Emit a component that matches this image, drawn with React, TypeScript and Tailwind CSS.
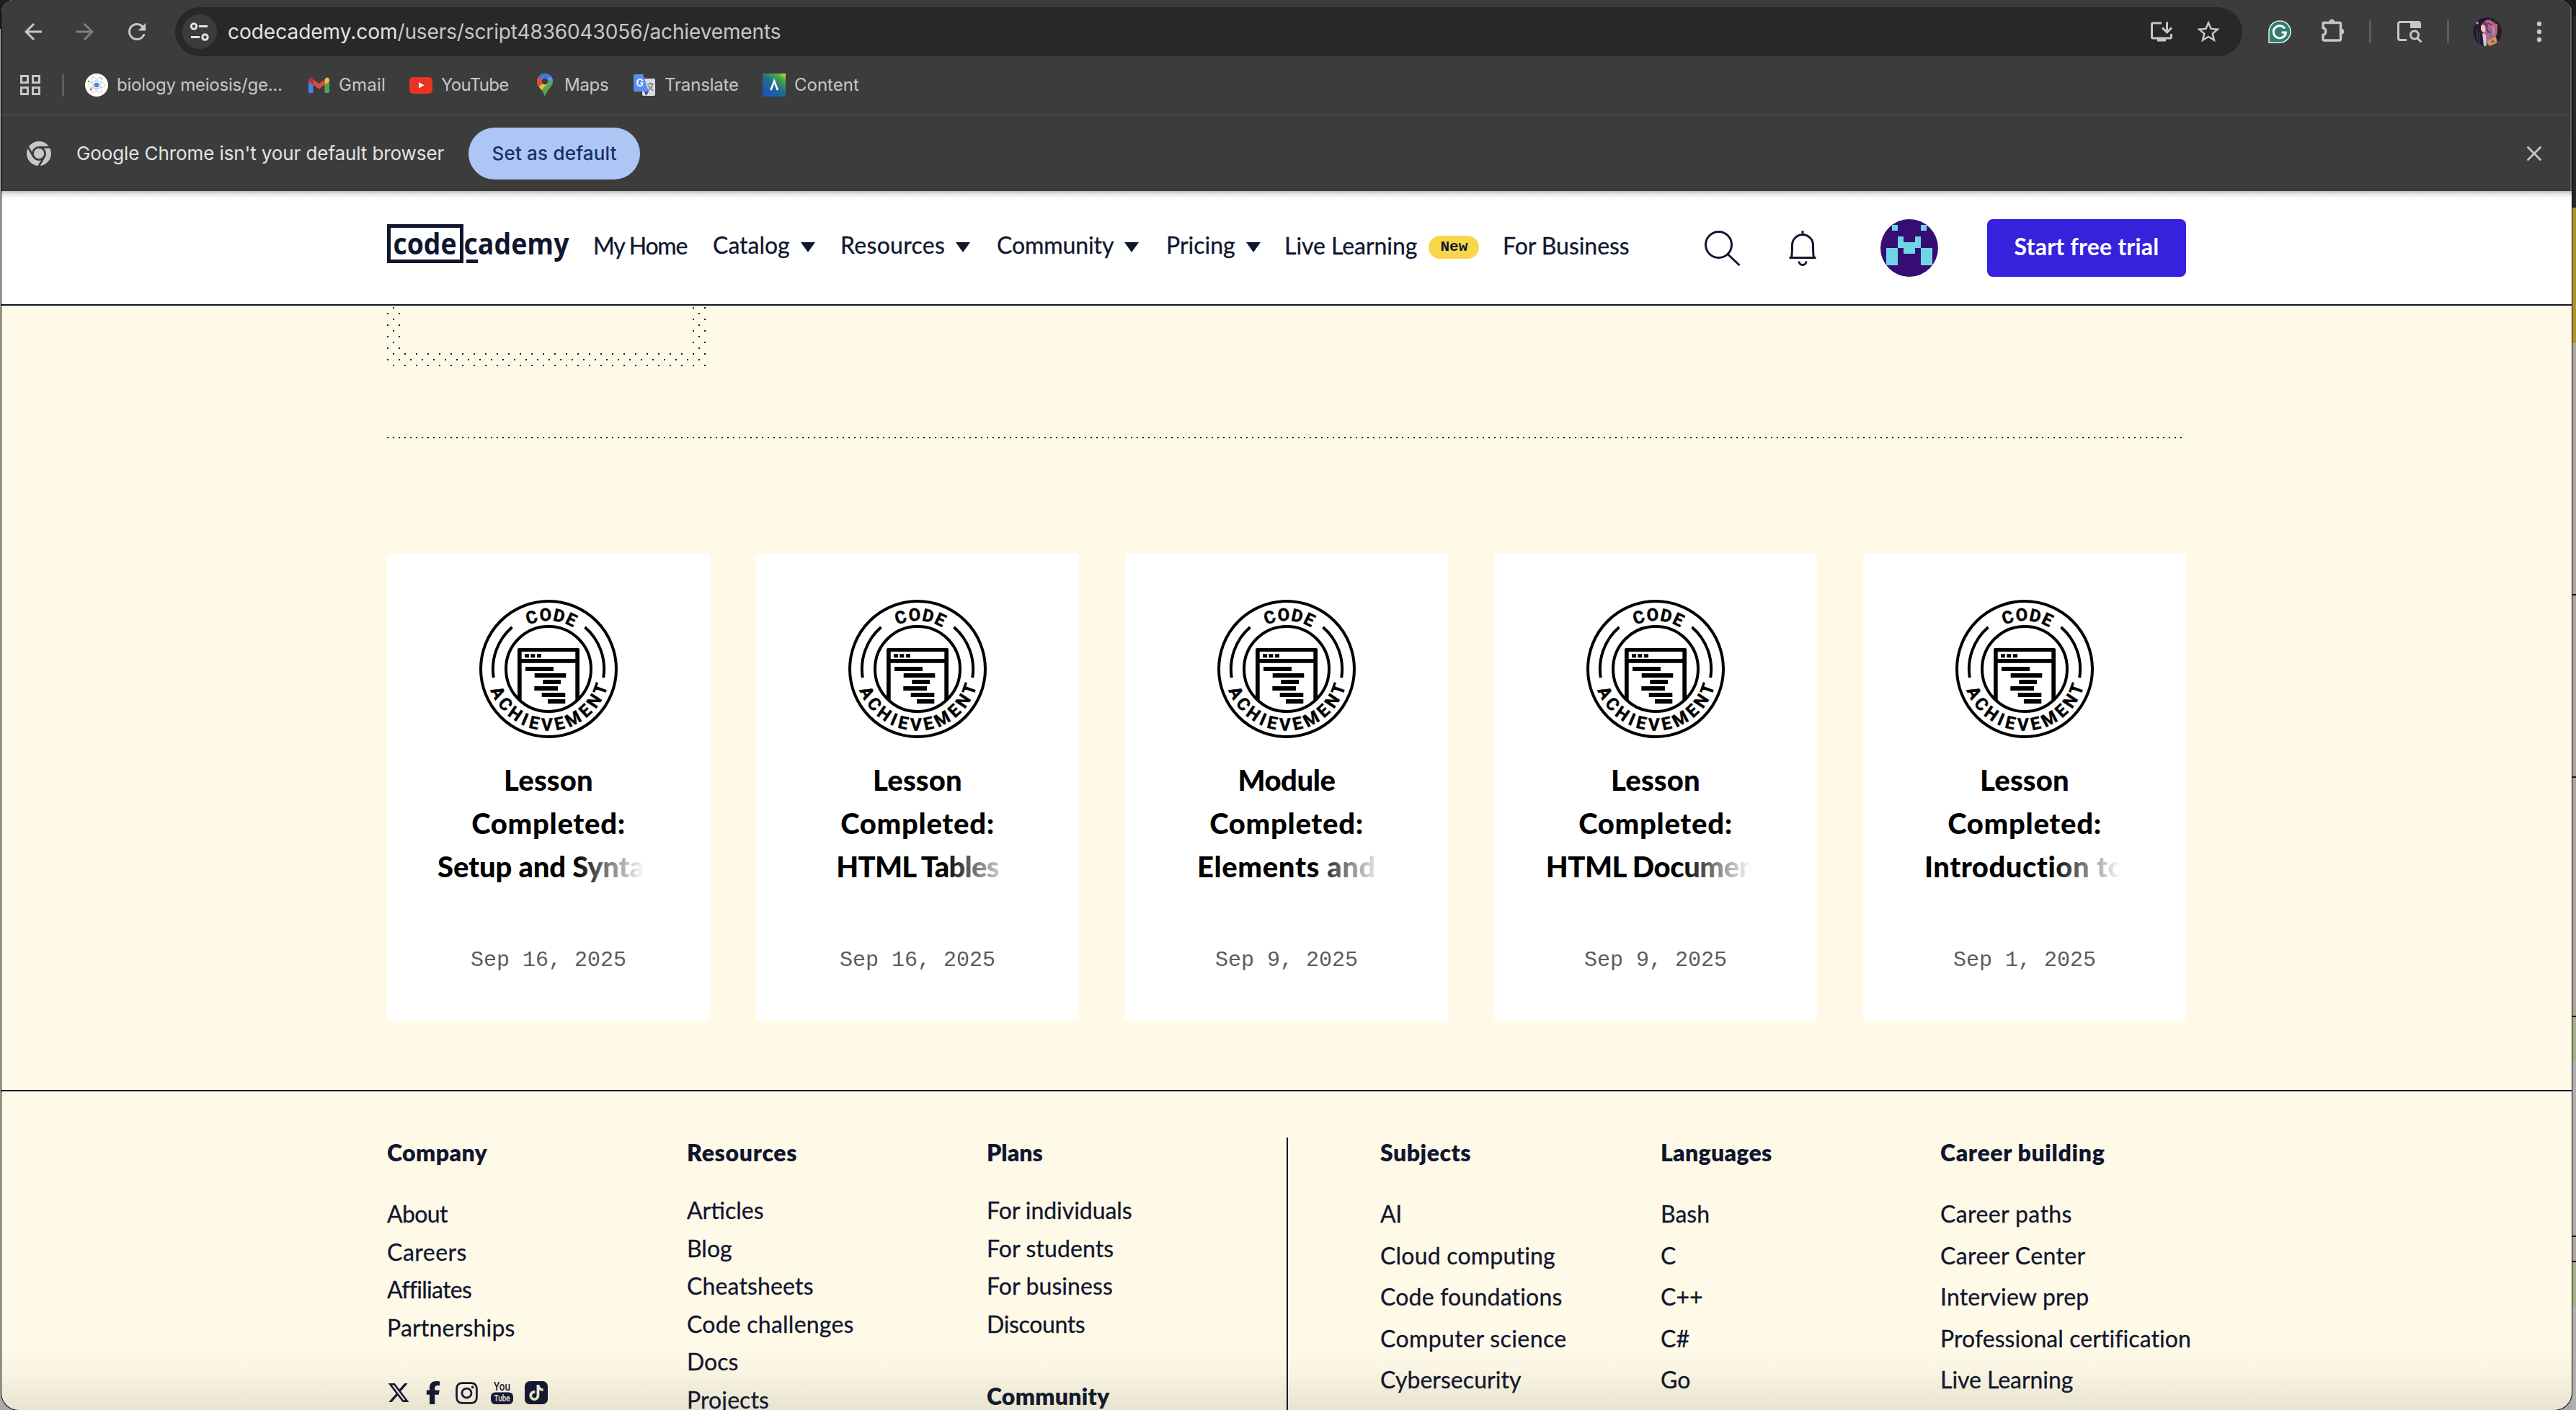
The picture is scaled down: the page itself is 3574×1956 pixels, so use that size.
import React from "react";
import { MdArrowBack, MdArrowForward, MdRefresh, MdStarBorder, MdInstallDesktop } from "react-icons/md";
import { FaXTwitter, FaFacebookF, FaInstagram, FaTiktok } from "react-icons/fa6";

type Item = { text: string; track: string };

/* ---------- browser chrome ---------- */

function SiteInfoIcon() {
  return (
    <div className="flex size-12 items-center justify-center rounded-full bg-[#3c3c3c]">
      <svg width="28" height="26" viewBox="0 0 28 26" fill="none" stroke="#e3e3e3" strokeWidth="3">
        <circle cx="6" cy="5.5" r="3.7" />
        <path d="M13 5.5h12M2 20.5h12" />
        <circle cx="21.5" cy="20.5" r="3.7" />
      </svg>
    </div>
  );
}

function GrammarlyIcon() {
  return (
    <svg width="32" height="32" viewBox="0 0 32 32">
      <path d="M1 31V16A15 15 0 1 1 16 31Z" fill="#2f7d6d" stroke="#e8efed" strokeWidth="1.5" />
      <path d="M23 11.5A8.6 8.6 0 1 0 24.4 17H18.5" fill="none" stroke="#fff" strokeWidth="3" />
    </svg>
  );
}

function ExtensionsIcon() {
  return (
    <svg width="32" height="34" viewBox="0 0 32 34">
      <path d="M4 6.500H25A1.500 1.500 0 0 1 26.500 8V29.500A1.500 1.500 0 0 1 25 31H3.500A1.500 1.500 0 0 1 2 29.500V23.500A5.200 5.200 0 0 0 2 13.500V8A1.500 1.500 0 0 1 3.500 6.500Z" fill="none" stroke="#c7c7c7" strokeWidth="3.400" />
      <path d="M10 6A4.200 4.200 0 0 1 18.400 6ZM27 14.500A4.200 4.200 0 0 1 27 23Z" fill="#c7c7c7" />
    </svg>
  );
}

function TabSearchIcon() {
  return (
    <svg width="36" height="32" viewBox="0 0 36 32" fill="none" stroke="#c7c7c7" strokeWidth="3">
      <path d="M14 27.5H5A2.5 2.5 0 0 1 2.5 25V5A2.5 2.5 0 0 1 5 2.5H30A2.5 2.5 0 0 1 32.500 5V10" />
      <path d="M19 2h12.500a2.500 2.500 0 0 1 2.500 2.500V11H19Z" fill="#c7c7c7" stroke="none" />
      <circle cx="25" cy="20.500" r="5.500" />
      <path d="M29 25L34.500 30.500" />
    </svg>
  );
}

function ProfilePicture() {
  return (
    <svg width="40" height="40" viewBox="0 0 40 40">
      <defs>
        <clipPath id="profile"><circle cx="20" cy="20" r="20" /></clipPath>
      </defs>
      <g clipPath="url(#profile)">
        <rect width="40" height="40" fill="#221c2c" />
        <path d="M14 8Q18 2 24 4Q34 8 34 16Q34 26 28 32L20 38L16 26Q10 16 14 8Z" fill="#b9608f" />
        <path d="M11 12Q14 8 18 10L17 21Q12 21 11 17Z" fill="#eec3c8" />
        <path d="M12 9Q17 4 21 9L20 24L17 12Z" fill="#7c3b62" />
        <path d="M13 22L18 24L19 40H15Z" fill="#cfc8d4" />
        <path d="M22 14Q29 22 23 30" stroke="#3f8f96" strokeWidth="2" fill="none" />
        <path d="M25 11Q31 14 28 24" stroke="#e892bb" strokeWidth="1.500" fill="none" />
        <path d="M21 8L27 12M20 18L24 22" stroke="#5b2d54" strokeWidth="1.500" />
        <path d="M20 33L32 27L34 36L22 40Z" fill="#dc9a3c" />
        <path d="M24 34L29 31L30 36Z" fill="#4c62b8" />
        <path d="M29 10L34 9L34 15Z" fill="#a8803f" />
        <circle cx="6" cy="8" r="1.800" fill="#e58ac0" />
        <path d="M6 16V32M9 20V36M31 3V8M24 0V4" stroke="#453b55" strokeWidth="1.200" />
      </g>
    </svg>
  );
}

function Toolbar() {
  return (
    <div className="flex h-[88px] items-center pl-[26px] text-[#c7c7c7]">
      <MdArrowBack size={36} />
      <MdArrowForward size={36} className="ml-9 text-[#7e7e7e]" />
      <MdRefresh size={36} className="ml-9" />
      <div className="ml-[35px] flex h-[68px] w-[2868px] items-center rounded-full bg-[#282828] pl-2.5 font-['Inter',sans-serif] text-[28px]">
        <SiteInfoIcon />
        <span className="ml-[15px] tracking-[-0.02px] text-[#e3e3e3]">codecademy.com</span>
        <span className="flex-1 tracking-[-0.12px] text-[#c7c7c7]">/users/script4836043056/achievements</span>
        <MdInstallDesktop size={36} />
        <MdStarBorder size={38} className="mr-[28px] ml-7" />
      </div>
      <div className="ml-9"><GrammarlyIcon /></div>
      <div className="-mt-1 ml-[42px]"><ExtensionsIcon /></div>
      <div className="ml-[34px] h-8 w-[3px] rounded bg-[#5e5e5e]" />
      <div className="ml-[35px]"><TabSearchIcon /></div>
      <div className="ml-[34px] h-8 w-[3px] rounded bg-[#5e5e5e]" />
      <div className="ml-[33px]"><ProfilePicture /></div>
      <svg className="ml-[46px]" width="12" height="32" viewBox="0 0 12 32" fill="#c7c7c7">
        <circle cx="6" cy="5" r="3.200" /><circle cx="6" cy="16" r="3.200" /><circle cx="6" cy="27" r="3.200" />
      </svg>
    </div>
  );
}

function BiologyIcon() {
  return (
    <svg width="32" height="32" viewBox="0 0 32 32" fill="none">
      <circle cx="16" cy="16" r="16" fill="#fff" />
      <g stroke="#c9ccd2" strokeWidth="1">
        <ellipse cx="16" cy="16" rx="12" ry="4.500" />
        <ellipse cx="16" cy="16" rx="12" ry="4.500" transform="rotate(60 16 16)" />
        <ellipse cx="16" cy="16" rx="12" ry="4.500" transform="rotate(120 16 16)" />
      </g>
      <circle cx="16" cy="16" r="3.200" fill="#3f86f0" />
      <circle cx="23" cy="7" r="1.400" fill="#f4c33c" />
      <circle cx="5" cy="11" r="1.400" fill="#55b46a" />
      <circle cx="8" cy="22" r="1.400" fill="#e0483b" />
    </svg>
  );
}

function GmailIcon() {
  return (
    <svg width="29" height="22" viewBox="0 0 29 22">
      <path d="M0 5L6.500 9V22H2A2 2 0 0 1 0 20Z" fill="#4a80ee" />
      <path d="M29 5L22.500 9V22H27A2 2 0 0 0 29 20Z" fill="#4fa65a" />
      <path d="M22.500 3.200L24 1.500Q26 -.5 28 1.500Q29 2.500 29 4V6L22.500 10.500Z" fill="#f2bd42" />
      <path d="M6.500 3.200L14.500 9L22.500 3.200V10.500L14.500 16.500L6.500 10.500Z" fill="#d94f3d" />
      <path d="M6.500 3.200L5 1.500Q3 -.5 1 1.500Q0 2.500 0 4V6L6.500 10.500Z" fill="#b3342b" />
    </svg>
  );
}

function YouTubeIcon() {
  return (
    <svg width="32" height="23" viewBox="0 0 32 23">
      <rect width="32" height="23" rx="5" fill="#ea3323" />
      <path d="M13 7L20.500 11.300L13 15.600Z" fill="#fff" />
    </svg>
  );
}

function MapsIcon() {
  return (
    <svg width="22" height="32" viewBox="0 0 22 32">
      <defs>
        <clipPath id="pin"><path d="M11 0A11 11 0 0 1 22 11C22 19 14 21 11 32C8 21 0 19 0 11A11 11 0 0 1 11 0Z" /></clipPath>
      </defs>
      <g clipPath="url(#pin)">
        <rect width="22" height="32" fill="#57a55a" />
        <path d="M-2 14L11 10L15 14L3 26L-2 24Z" fill="#f2bd42" />
        <path d="M-2 2L4 4L11 11L2 19L-2 16Z" fill="#d94f3d" />
        <path d="M2 4L8 -1H24V2L13 12L11 11Z" fill="#3b78e6" />
        <path d="M12 9L20 3L23 11L20 10Z" fill="#5a92f0" />
      </g>
      <circle cx="11" cy="11" r="4.200" fill="#3c3c3c" />
    </svg>
  );
}

function TranslateIcon() {
  return (
    <svg width="30" height="30" viewBox="0 0 30 30">
      <rect x="12" y="6" width="18" height="24" rx="2" fill="#dcdcdc" />
      <path d="M19 13.500H28M23.500 11.500V13.500M26.500 14Q25 19.500 19.500 22.500M20.500 15.500Q22.500 20 27.500 22.500" stroke="#5b7f8c" strokeWidth="1.500" fill="none" />
      <path d="M15 24H21.500L17 30Z" fill="#3648b5" />
      <path d="M2 0H13L21 24H2A2 2 0 0 1 0 22V2A2 2 0 0 1 2 0Z" fill="#5a8bee" />
      <text x="3.500" y="17" fontFamily="Inter" fontWeight="600" fontSize="14" fill="#fff">G</text>
    </svg>
  );
}

function ContentIcon() {
  return (
    <svg width="32" height="32" viewBox="0 0 32 32">
      <defs>
        <linearGradient id="content" x1="1" y1="0" x2="0.300" y2="0.900">
          <stop offset="0" stopColor="#c8e63c" />
          <stop offset="0.250" stopColor="#4aa84c" />
          <stop offset="0.600" stopColor="#1f6f8c" />
          <stop offset="1" stopColor="#1d55b8" />
        </linearGradient>
      </defs>
      <rect width="32" height="32" fill="url(#content)" />
      <path d="M11.500 23L16.200 10.500L21 23" stroke="#fff" strokeWidth="2.600" fill="none" />
    </svg>
  );
}

function Bookmarks() {
  return (
    <div className="flex h-[70px] items-center pb-[10px] pl-[26px] font-['Inter',sans-serif] text-[24px] whitespace-nowrap text-[#c7c7c7]">
      <div className="grid grid-cols-2 gap-1">
        <div className="size-3 border-[3px] border-[#c7c7c7]" />
        <div className="size-3 border-[3px] border-[#c7c7c7]" />
        <div className="size-3 border-[3px] border-[#c7c7c7]" />
        <div className="size-3 border-[3px] border-[#c7c7c7]" />
      </div>
      <div className="ml-[30px] h-8 w-[3px] rounded bg-[#5e5e5e]" />
      <div className="ml-[29px] flex w-[310px] items-center gap-3"><BiologyIcon /><span className="tracking-[-0.23px]">biology meiosis/ge...</span></div>
      <div className="flex w-[140px] items-center gap-[13px]"><GmailIcon /><span className="tracking-[0.2px]">Gmail</span></div>
      <div className="flex w-[177px] items-center gap-3"><YouTubeIcon /><span className="tracking-[-0.7px]">YouTube</span></div>
      <div className="flex w-[134px] items-center gap-4"><MapsIcon /><span className="tracking-[-0.28px]">Maps</span></div>
      <div className="flex w-[179px] items-center gap-[13px]"><TranslateIcon /><span className="tracking-[-0.17px]">Translate</span></div>
      <div className="flex items-center gap-3"><ContentIcon /><span>Content</span></div>
    </div>
  );
}

function ChromeIcon() {
  return (
    <svg width="34" height="34" viewBox="0 0 34 34">
      <circle cx="17" cy="17" r="17" fill="#c7c7c7" />
      <g stroke="#3c3c3c" strokeWidth="2.800" fill="none">
        <circle cx="17" cy="17" r="8.600" />
        <path d="M17 8.400H36" />
        <path d="M17 8.400H36" transform="rotate(120 17 17)" />
        <path d="M17 8.400H36" transform="rotate(240 17 17)" />
      </g>
    </svg>
  );
}

function InfoBar() {
  return (
    <div className="flex h-[107px] items-center border-t-2 border-[#484848] pl-[35px] font-['Inter',sans-serif] text-[26px]">
      <ChromeIcon />
      <span className="ml-[35px] tracking-[-0.1px] text-[#e3e3e3]">Google Chrome isn't your default browser</span>
      <div className="ml-[34px] flex h-[72px] w-[238px] items-center justify-center rounded-full bg-[#aec6f6] font-medium tracking-[0.2px] text-[#1a2f66]">Set as default</div>
      <svg className="mr-[40px] ml-auto" width="20" height="20" viewBox="0 0 20 20" stroke="#c7c7c7" strokeWidth="2.800" strokeLinecap="round">
        <path d="M1.500 1.500L18.500 18.500M18.500 1.500L1.500 18.500" />
      </svg>
    </div>
  );
}

/* ---------- site header ---------- */

function Logo() {
  return (
    <svg className="shrink-0 overflow-visible" width="256" height="62" viewBox="0 0 256 62" fill="#10162f">
      <rect x="2.500" y="4.500" width="101" height="49" fill="none" stroke="#10162f" strokeWidth="5" />
      <rect x="110" y="51" width="16" height="5" />
      <text x="8.500" y="44" fontFamily="Open Sans" fontWeight="700" fontSize="42" textLength="88" lengthAdjust="spacingAndGlyphs">code</text>
      <text x="106.500" y="44" fontFamily="Open Sans" fontWeight="700" fontSize="42" textLength="146" lengthAdjust="spacingAndGlyphs">cademy</text>
    </svg>
  );
}

function Caret() {
  return (
    <svg className="mt-1.5 ml-[15px]" width="20" height="14" viewBox="0 0 20 14" fill="#10162f"><path d="M0 0H20L10 14Z" /></svg>
  );
}

const avatarCells = [[2, 1, 1, 1], [7, 1, 1, 1], [3, 3, 1, 2], [6, 3, 1, 2], [4, 4, 2, 2], [1, 5, 2, 3], [7, 5, 2, 3]];

function SiteHeader() {
  return (
    <header className="flex h-[159px] shrink-0 items-center border-b-2 border-[#10162f] bg-[linear-gradient(#bdbdbd_0px,#e4e4e4_4px,#fafafa_9px,#fff_13px)] pl-[535px] text-[32px] whitespace-nowrap">
      <nav className="flex items-center pb-2 [-webkit-text-stroke:0.3px]">
        <div className="w-[286px]"><Logo /></div>
        <div className="w-[166px] pt-0.5 tracking-[-1.2px]">My Home</div>
        <div className="flex w-[177px] items-center">Catalog<Caret /></div>
        <div className="flex w-[217px] items-center tracking-[0.3px]">Resources<Caret /></div>
        <div className="flex w-[235px] items-center tracking-[-0.1px]">Community<Caret /></div>
        <div className="flex w-[164px] items-center tracking-[0px]">Pricing<Caret /></div>
        <div className="flex w-[303px] items-center pt-0.5 tracking-[-0.05px]">
          Live Learning
          <span className="mt-1 ml-4 flex h-8 w-[70px] items-center justify-center rounded-full bg-[#f8d54a] font-['Liberation_Mono',monospace] text-[21px] font-bold tracking-normal [-webkit-text-stroke:0px]">New</span>
        </div>
        <div className="w-[280px] pt-0.5 tracking-[-0.05px]">For Business</div>
      </nav>
      <svg width="50" height="50" viewBox="0 0 50 50" fill="none" stroke="#10162f" strokeWidth="3">
        <circle cx="19.500" cy="20.500" r="18" /><path d="M32 33.500L48.500 49" />
      </svg>
      <svg className="ml-[66px]" width="40" height="50" viewBox="0 0 40 50" fill="none" stroke="#10162f" strokeWidth="3">
        <path d="M20 1V6M1.500 38.500H38.500M4.500 38C5.500 34 5.500 28 5.500 21A14.500 14.500 0 0 1 34.500 21C34.500 28 34.500 34 35.500 38" />
        <path d="M15 43.500A5 5 0 0 0 25 43.500" />
      </svg>
      <svg className="ml-[88px] rounded-full bg-[#350d73]" width="80" height="80" viewBox="0 0 10 10" shapeRendering="crispEdges" fill="#70d4e8">
        {avatarCells.map(([x, y, w, h]) => <rect key={`${x}-${y}`} x={x} y={y} width={w} height={h} />)}
      </svg>
      <button className="ml-[68px] flex h-20 w-[276px] items-center justify-center rounded-lg bg-[#3622dd] pb-1 font-bold tracking-[0.2px] text-white">Start free trial</button>
    </header>
  );
}

/* ---------- achievements ---------- */

const codeLines = [[-32, -3, 39], [-19.3, 6, 43.6], [-7.7, 15, 24.7], [-19.7, 24, 32.7], [-9.3, 33, 32.6], [-1, 42, 24.3]];

function AchievementBadge({ id }: { id: string }) {
  return (
    <svg width="192" height="192" viewBox="-96 -96 192 192" fill="none" stroke="#000" strokeWidth="4">
      <defs>
        <path id={`${id}-top`} d="M-67 0A67 67 0 0 1 67 0" />
        <path id={`${id}-bottom`} d="M-85.500 0A85.500 85.500 0 0 0 85.500 0" />
        <clipPath id={`${id}-clip`}><circle r="60" /></clipPath>
      </defs>
      <circle r="94" />
      <circle r="59" />
      <path d="M-50.500 -58A77 77 0 0 0 -76.200 12M50.500 -58A77 77 0 0 1 76.200 12" />
      <g clipPath={`url(#${id}-clip)`} stroke="none" fill="#000">
        <path fillRule="evenodd" d="M-41 -29H41Q43 -29 43 -27V48H37.300V-8.300H-37.300V48H-43V-27Q-43 -29 -41 -29ZM-37.300 -24V-14H37.300V-24Z" />
        <path d="M-33 -20.700h6v5h-6zM-24.700 -20.700h6v5h-6zM-16 -20.700h6v5h-6z" />
        {codeLines.map(([x, y, w]) => <rect key={y} x={x} y={y} width={w} height="6" />)}
      </g>
      <g strokeWidth="0.500" fill="#000" fontFamily="Roboto" fontWeight="700" fontSize="24" textAnchor="middle">
        <text transform="rotate(2.500)" letterSpacing="1.200"><textPath href={`#${id}-top`} startOffset="50.500%">CODE</textPath></text>
        <text transform="rotate(-1.800)" letterSpacing="5"><textPath href={`#${id}-bottom`} startOffset="51%">ACHIEVEMENT</textPath></text>
      </g>
    </svg>
  );
}

const completed = { text: "Completed:", track: "tracking-[0.7px]" };
const lesson = { text: "Lesson", track: "tracking-[0.2px]" };

const achievements: { lines: Item[]; date: string }[] = [
  { lines: [lesson, completed, { text: "Setup and Syntax", track: "tracking-[-0.16px]" }], date: "Sep 16, 2025" },
  { lines: [lesson, completed, { text: "HTML Tables", track: "tracking-[-0.75px]" }], date: "Sep 16, 2025" },
  { lines: [{ text: "Module", track: "tracking-[-0.4px]" }, completed, { text: "Elements and", track: "tracking-[0.65px]" }], date: "Sep 9, 2025" },
  { lines: [lesson, completed, { text: "HTML Document", track: "tracking-[-0.45px]" }], date: "Sep 9, 2025" },
  { lines: [lesson, completed, { text: "Introduction to", track: "tracking-[0.5px]" }], date: "Sep 1, 2025" },
];

function Achievements() {
  return (
    <main className="shrink-0 px-[535px]">
      <div className="h-[84px] w-[443px] bg-[conic-gradient(from_0deg_at_2px_2px,transparent_75%,#10162f_0),conic-gradient(from_0deg_at_2px_2px,transparent_75%,#10162f_0)] bg-[length:16px_16px,16px_16px] bg-[position:0px_10px,8px_2px] pr-[20px] pb-[20px] pl-[18px]">
        <div className="h-full bg-[#fff9e7]" />
      </div>
      <div className="mt-[98px] h-0.5 w-[2490px] bg-[repeating-linear-gradient(90deg,#10162f_0px,#10162f_2px,transparent_2px,transparent_8px)]" />
      <div className="mt-40 flex gap-16 pb-24 text-black">
        {achievements.map((a, i) => (
          <article key={i} className="flex h-[648px] w-[448px] flex-col items-center rounded bg-white px-16 pt-16">
            <AchievementBadge id={`badge${i}`} />
            <h3 className="relative mt-7 flex w-[320px] flex-col items-center text-[40px] leading-[60px] font-black whitespace-nowrap">
              {a.lines.map((l) => <span key={l.text} className={l.track}>{l.text}</span>)}
              <span className="absolute right-0 bottom-0 h-[60px] w-[124px] bg-[linear-gradient(90deg,transparent_0px,#fff_97px)]" />
            </h3>
            <time className="mt-20 font-['Liberation_Mono',monospace] text-[30px] leading-10 text-[#5c5c5c]">{a.date}</time>
          </article>
        ))}
      </div>
    </main>
  );
}

/* ---------- footer ---------- */

const company: Item[] = [
  { text: "About", track: "tracking-[-0.6px]" },
  { text: "Careers", track: "tracking-[0.5px]" },
  { text: "Affiliates", track: "tracking-[-0.7px]" },
  { text: "Partnerships", track: "tracking-[0.2px]" },
];
const resources: Item[] = [
  { text: "Articles", track: "tracking-[0px]" },
  { text: "Blog", track: "tracking-[0px]" },
  { text: "Cheatsheets", track: "tracking-[0.15px]" },
  { text: "Code challenges", track: "tracking-[0.23px]" },
  { text: "Docs", track: "tracking-[0px]" },
  { text: "Projects", track: "tracking-[0.1px]" },
];
const plans: Item[] = [
  { text: "For individuals", track: "tracking-[-0.05px]" },
  { text: "For students", track: "tracking-[0.1px]" },
  { text: "For business", track: "tracking-[0.1px]" },
  { text: "Discounts", track: "tracking-[-0.35px]" },
];
const subjects: Item[] = [
  { text: "AI", track: "tracking-[-0.5px]" },
  { text: "Cloud computing", track: "tracking-[0.2px]" },
  { text: "Code foundations", track: "tracking-[0.2px]" },
  { text: "Computer science", track: "tracking-[0.4px]" },
  { text: "Cybersecurity", track: "tracking-[0.05px]" },
];
const languages: Item[] = [
  { text: "Bash", track: "tracking-[0px]" },
  { text: "C", track: "tracking-[0px]" },
  { text: "C++", track: "tracking-[0px]" },
  { text: "C#", track: "tracking-[0px]" },
  { text: "Go", track: "tracking-[0px]" },
];
const career: Item[] = [
  { text: "Career paths", track: "tracking-[0.4px]" },
  { text: "Career Center", track: "tracking-[0.37px]" },
  { text: "Interview prep", track: "tracking-[0.2px]" },
  { text: "Professional certification", track: "tracking-[0.07px]" },
  { text: "Live Learning", track: "tracking-[-0.05px]" },
];

function Links({ items, className }: { items: Item[]; className: string }) {
  return (
    <ul className={className}>
      {items.map((i) => <li key={i.text} className={i.track}>{i.text}</li>)}
    </ul>
  );
}

function SocialIcons() {
  return (
    <div className="mt-12 flex h-8 items-center">
      <FaXTwitter size={32} />
      <FaFacebookF size={32} className="ml-4" />
      <FaInstagram size={35} className="ml-[13px]" />
      <svg className="ml-4" width="31" height="32" viewBox="0 0 31 32">
        <rect y="15.500" width="31" height="16.500" rx="6" fill="#10162f" />
        <text x="15.500" y="13" textAnchor="middle" fontFamily="Roboto" fontWeight="500" fontSize="17" textLength="23" lengthAdjust="spacingAndGlyphs" fill="#10162f">You</text>
        <text x="15.500" y="28" textAnchor="middle" fontFamily="Roboto" fontWeight="500" fontSize="12" textLength="22" lengthAdjust="spacingAndGlyphs" fill="#fff9e7" stroke="none">Tube</text>
      </svg>
      <div className="ml-4 flex size-8 items-center justify-center rounded-[7px] bg-[#10162f] text-[#f5f2dd]"><FaTiktok size={22} /></div>
    </div>
  );
}

function SiteFooter() {
  return (
    <footer className="flex shrink-0 border-t-2 border-[#10162f] pt-16 pl-[535px] text-[32px] whitespace-nowrap">
      <div className="w-[416px]">
        <h4 className="leading-[42px] font-extrabold tracking-[0.4px]">Company</h4>
        <Links items={company} className="mt-[38px] leading-[52.5px] [-webkit-text-stroke:0.3px]" />
        <SocialIcons />
      </div>
      <div className="w-[416px]">
        <h4 className="leading-[42px] font-extrabold tracking-[0.7px]">Resources</h4>
        <Links items={resources} className="mt-[33px] leading-[52.5px] [-webkit-text-stroke:0.3px]" />
      </div>
      <div className="w-[416px]">
        <h4 className="leading-[42px] font-extrabold tracking-[0px]">Plans</h4>
        <Links items={plans} className="mt-[33px] leading-[52.5px] [-webkit-text-stroke:0.3px]" />
        <h4 className="mt-[53px] leading-[42px] font-extrabold tracking-[0.25px]">Community</h4>
      </div>
      <div className="h-[600px] w-[130px] border-l-2 border-[#10162f]" />
      <div className="w-[389px]">
        <h4 className="leading-[42px] font-extrabold tracking-[0.5px]">Subjects</h4>
        <Links items={subjects} className="mt-[35px] leading-[57.5px] [-webkit-text-stroke:0.3px]" />
      </div>
      <div className="w-[388px]">
        <h4 className="leading-[42px] font-extrabold tracking-[0.3px]">Languages</h4>
        <Links items={languages} className="mt-[35px] leading-[57.5px] [-webkit-text-stroke:0.3px]" />
      </div>
      <div>
        <h4 className="leading-[42px] font-extrabold tracking-[0.65px]">Career building</h4>
        <Links items={career} className="mt-[35px] leading-[57.5px] [-webkit-text-stroke:0.3px]" />
      </div>
    </footer>
  );
}

/* ---------- window ---------- */

function BackdropStrip() {
  return (
    <div className="flex w-[5px] flex-col">
      <div className="h-[22px] bg-[#1c1c1c]" />
      <div className="h-[162px] border-b border-[#333] bg-[#282828]" />
      <div className="h-[104px] bg-[#262626]" />
      <div className="h-[188px] bg-[#ad9632]" />
      <div className="h-[350px] border-b-2 border-black bg-[#b0a59f]" />
      <div className="h-[253px] border-b-2 border-[#10162f] bg-[#b0a59f]" />
      <div className="h-[332px] border-b-2 border-[#10162f] bg-[#b0a59f]" />
      <div className="h-[62px] bg-[#a5b08b]" />
      <div className="h-[243px] border-b-2 border-[#10162f] bg-[#b0b0b0]" />
      <div className="h-[35px] border-b-2 border-black bg-[#b0a59f]" />
      <div className="h-[61px] bg-[#a5b08b]" />
      <div className="flex-1 bg-[#b0b0b0]" />
    </div>
  );
}

export default function App() {
  return (
    <div className="flex h-[1956px] w-[3574px] overflow-hidden bg-[#a9a9a9]">
      <div className="flex h-full w-[3569px] bg-[linear-gradient(#1e1e1e_0px,#1e1e1e_40px,#a9a9a9_40px)] pr-px pl-0.5">
        <div className="relative flex h-full w-[3566px] flex-col overflow-hidden rounded-t-[16px] rounded-b-[24px] bg-[#fff9e7] font-['Lato',sans-serif] text-[#10162f] shadow-[0_0_0_1px_#000]">
          <div className="shrink-0 border-r-2 border-[#666] bg-[#3c3c3c]">
            <Toolbar />
            <Bookmarks />
            <InfoBar />
          </div>
          <SiteHeader />
          <Achievements />
          <SiteFooter />
          <div className="pointer-events-none absolute inset-x-0 bottom-0 h-[84px] bg-[linear-gradient(transparent,rgba(60,70,40,0.03)_40%,rgba(60,70,40,0.12))]" />
        </div>
      </div>
      <BackdropStrip />
    </div>
  );
}
